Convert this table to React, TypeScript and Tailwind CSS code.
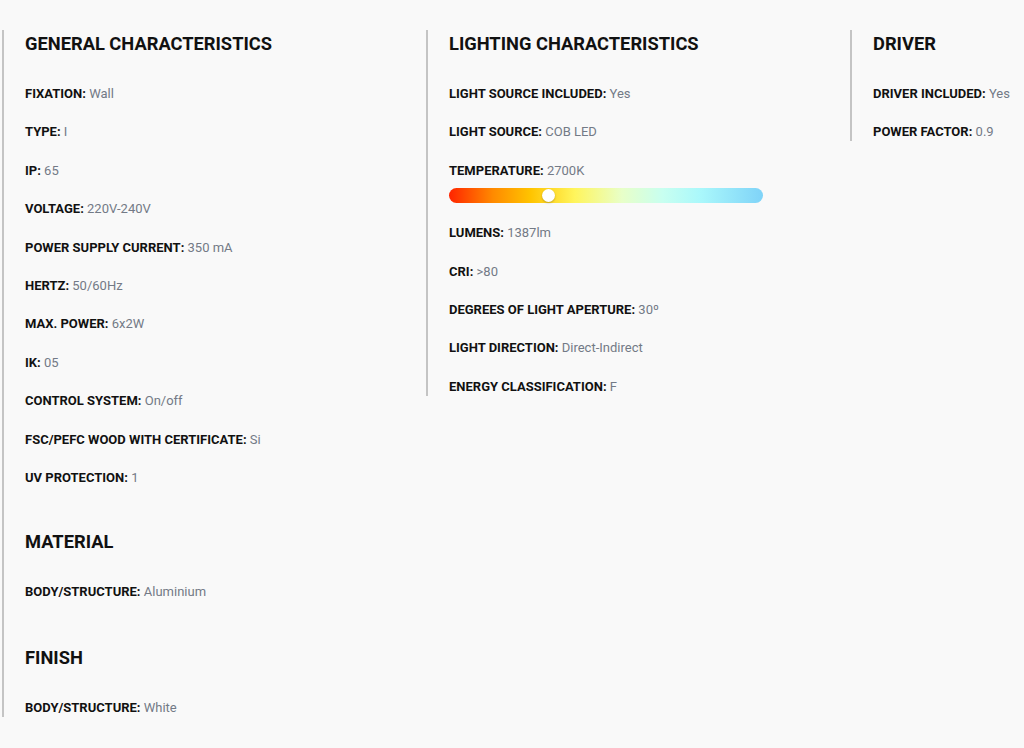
import React from "react";

type Spec = { label: string; value: string; bar?: boolean };
type Section = { title: string; rows: Spec[]; gapTop?: string };

const columns: Section[][] = [
  [
    {
      title: "GENERAL CHARACTERISTICS",
      rows: [
        { label: "FIXATION", value: "Wall" },
        { label: "TYPE", value: "I" },
        { label: "IP", value: "65" },
        { label: "VOLTAGE", value: "220V-240V" },
        { label: "POWER SUPPLY CURRENT", value: "350 mA" },
        { label: "HERTZ", value: "50/60Hz" },
        { label: "MAX. POWER", value: "6x2W" },
        { label: "IK", value: "05" },
        { label: "CONTROL SYSTEM", value: "On/off" },
        { label: "FSC/PEFC WOOD WITH CERTIFICATE", value: "Si" },
        { label: "UV PROTECTION", value: "1" },
      ],
    },
    {
      title: "MATERIAL",
      gapTop: "mt-[41px]",
      rows: [{ label: "BODY/STRUCTURE", value: "Aluminium" }],
    },
    {
      title: "FINISH",
      gapTop: "mt-[43px]",
      rows: [{ label: "BODY/STRUCTURE", value: "White" }],
    },
  ],
  [
    {
      title: "LIGHTING CHARACTERISTICS",
      rows: [
        { label: "LIGHT SOURCE INCLUDED", value: "Yes" },
        { label: "LIGHT SOURCE", value: "COB LED" },
        { label: "TEMPERATURE", value: "2700K", bar: true },
        { label: "LUMENS", value: "1387lm" },
        { label: "CRI", value: ">80" },
        { label: "DEGREES OF LIGHT APERTURE", value: "30º" },
        { label: "LIGHT DIRECTION", value: "Direct-Indirect" },
        { label: "ENERGY CLASSIFICATION", value: "F" },
      ],
    },
  ],
  [
    {
      title: "DRIVER",
      rows: [
        { label: "DRIVER INCLUDED", value: "Yes" },
        { label: "POWER FACTOR", value: "0.9" },
      ],
    },
  ],
];

function TemperatureBar() {
  return (
    <div className="relative mt-[8px] mb-[1px] h-[15px] w-[314px] rounded-full bg-[linear-gradient(to_right,#ff2400_0%,#ff8a00_14%,#ffc400_26%,#fff55c_40%,#e8ffc8_55%,#c8fff0_68%,#aaf8fb_80%,#7fd3f8_100%)]">
      <div className="absolute left-[93px] top-[1px] h-[13px] w-[13px] rounded-full bg-white shadow-[0_1px_2px_rgba(0,0,0,0.25)]" />
    </div>
  );
}

export default function App() {
  return (
    <div className="min-h-[748px] overflow-hidden bg-[#f9f9f9] pt-[30px] pl-[2px] font-['Roboto',sans-serif] text-[#111]">
      <div className="flex items-start">
        {columns.map((sections, ci) => (
          <div
            key={ci}
            className="w-[424px] shrink-0 border-l-2 border-[#c4c4c4] pl-[21px]"
          >
            {sections.map((s, si) => (
              <div key={si} className={s.gapTop ?? ""}>
                <h2 className="text-[18.3px] leading-[28px] font-bold">{s.title}</h2>
                <div className="mt-[27px] flex flex-col gap-[20.4px]">
                  {s.rows.map((r) => (
                    <div key={r.label}>
                      <p className="text-[13px] leading-[18px]">
                        <span className="font-bold">{r.label}:</span>{" "}
                        <span className="text-[#737a86]">{r.value}</span>
                      </p>
                      {r.bar && <TemperatureBar />}
                    </div>
                  ))}
                </div>
              </div>
            ))}
          </div>
        ))}
      </div>
    </div>
  );
}
